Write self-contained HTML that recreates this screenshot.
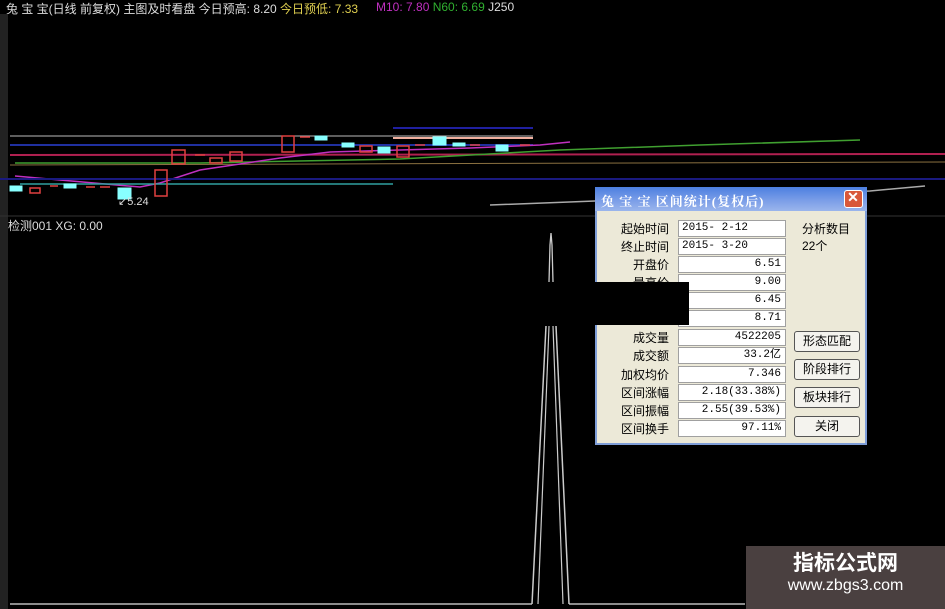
<!DOCTYPE html>
<html><head><meta charset="utf-8"><style>
*{margin:0;padding:0;box-sizing:border-box}
body{width:945px;height:609px;background:#000;position:relative;overflow:hidden;font-family:"Liberation Sans","Noto Sans CJK SC",sans-serif}
.t{position:absolute;font-size:12px;white-space:nowrap}
.dlg{position:absolute;left:595px;top:187px;width:272px;height:258px;background:#ece9d8;border:2px solid #7f9ed8;border-top:none}
.tb{position:absolute;left:-2px;top:0;width:272px;height:24px;background:linear-gradient(#4c7fe0,#7ea0e8 60%,#9bb5ec);color:#fff;font-size:13px;font-weight:bold;padding:4px 0 0 6px;letter-spacing:1px;font-family:"Liberation Serif","Noto Serif CJK SC",serif}
.x{position:absolute;right:4px;top:3px;width:19px;height:18px;background:#d9583a;border:1px solid #fff;border-radius:3px;color:#fff;font-size:14px;text-align:center;line-height:16px}
.lb{position:absolute;left:0;width:72px;text-align:right;font-size:12px;color:#000}
.f{position:absolute;left:81px;width:108px;height:17px;background:#fff;border:1px solid #a0a0a0;font-size:11px;text-align:right;padding-right:4px;line-height:15px;font-family:"Liberation Mono","Noto Sans CJK SC",monospace}
.b{position:absolute;left:197px;width:66px;height:21px;background:#f4f3ee;border:1px solid #555;border-radius:3px;font-size:12px;text-align:center;line-height:19px}
</style></head><body>
<div class="t" style="left:6px;top:0;color:#ddd">兔 宝 宝(日线 前复权) 主图及时看盘 今日预高: 8.20 <span style="color:#e0d050">今日预低: 7.33</span></div>
<div class="t" style="left:376px;top:0;color:#c030c0">M10: 7.80 <span style="color:#30b030">N60: 6.69</span> <span style="color:#ddd">J250</span></div>
<div style="position:absolute;left:0;top:14px;width:8px;height:595px;background:#222"></div>
<svg width="945" height="609" style="position:absolute;left:0;top:0">
<line x1="10" y1="136" x2="533" y2="136" stroke="#bbb"/>
<line x1="10" y1="145" x2="533" y2="145" stroke="#2030a0" stroke-width="2"/>
<line x1="393" y1="128" x2="533" y2="128" stroke="#2020a0" stroke-width="2"/>
<line x1="10" y1="155" x2="945" y2="154" stroke="#b02050" stroke-width="2"/>
<line x1="10" y1="165" x2="945" y2="162" stroke="#8a7040"/>
<polyline points="15,163 200,163 400,159 560,150 700,145 860,140" fill="none" stroke="#40a030" stroke-width="1.5"/>
<polyline points="15,176 60,180 140,187 160,183 200,170 280,158 330,152 400,150 470,148 540,145 570,142" fill="none" stroke="#c030c0" stroke-width="1.5"/>
<line x1="20" y1="184" x2="393" y2="184" stroke="#30a0a0" stroke-width="1.5"/>
<line x1="0" y1="179" x2="945" y2="179" stroke="#1a1a80" stroke-width="2"/>
<polyline points="490,205 595,201 870,191 925,186" fill="none" stroke="#aaa" stroke-width="1.5"/>
<line x1="0" y1="216" x2="945" y2="216" stroke="#333"/>
<line x1="393" y1="138" x2="533" y2="138" stroke="#f0b0a0" stroke-width="2"/>
<g fill="#8ff" stroke="#8ff">
<rect x="10" y="186" width="12" height="5"/><rect x="64" y="184" width="12" height="4"/><rect x="118" y="188" width="13" height="11"/><rect x="315" y="136" width="12" height="4"/><rect x="342" y="143" width="12" height="4"/><rect x="378" y="147" width="12" height="6"/><rect x="433" y="137" width="13" height="8"/><rect x="453" y="143" width="12" height="3"/><rect x="496" y="145" width="12" height="6"/>
</g>
<g fill="none" stroke="#e04040" stroke-width="1.5">
<rect x="30" y="188" width="10" height="5"/><rect x="155" y="170" width="12" height="26"/><rect x="172" y="150" width="13" height="14"/><rect x="230" y="152" width="12" height="9"/><rect x="282" y="136" width="12" height="16"/><rect x="360" y="146" width="12" height="6"/><rect x="397" y="146" width="12" height="11"/><rect x="210" y="158" width="12" height="5"/>
<line x1="195" y1="155" x2="205" y2="155"/><line x1="50" y1="186" x2="58" y2="186"/><line x1="86" y1="187" x2="95" y2="187"/><line x1="100" y1="187" x2="110" y2="187"/><line x1="300" y1="137" x2="310" y2="137"/><line x1="415" y1="145" x2="425" y2="145"/><line x1="470" y1="145" x2="480" y2="145"/><line x1="520" y1="145" x2="530" y2="145"/>
</g>
<text x="118" y="205" fill="#ddd" font-size="11" font-family="Liberation Sans">↙5.24</text>
<line x1="10" y1="604" x2="532" y2="604" stroke="#bbb" stroke-width="1.5"/>
<line x1="569" y1="604" x2="745" y2="604" stroke="#bbb" stroke-width="1.5"/>
<polyline points="532,604 546,326" fill="none" stroke="#ccc" stroke-width="1.5"/>
<polyline points="538,604 549,326" fill="none" stroke="#ccc" stroke-width="1.2"/>
<polyline points="569,604 556,326" fill="none" stroke="#ccc" stroke-width="1.5"/>
<polyline points="563,604 553,326" fill="none" stroke="#ccc" stroke-width="1.2"/>
<polyline points="549,282 550,245 551,233 552,245 553,282" fill="none" stroke="#ccc" stroke-width="1.3"/>
</svg>
<div class="t" style="left:8px;top:217px;color:#ddd">检测001 XG: 0.00</div>
<div class="dlg">
<div class="tb">兔 宝 宝 区间统计(复权后)<div class="x">✕</div></div>
<div class="lb" style="top:33px">起始时间</div><div class="f" style="top:33px;text-align:left;padding-left:3px">2015- 2-12</div>
<div class="lb" style="top:51px">终止时间</div><div class="f" style="top:51px;text-align:left;padding-left:3px">2015- 3-20</div>
<div class="lb" style="top:69px">开盘价</div><div class="f" style="top:69px">6.51</div>
<div class="lb" style="top:87px">最高价</div><div class="f" style="top:87px">9.00</div>
<div class="f" style="top:105px">6.45</div>
<div class="f" style="top:123px">8.71</div>
<div class="lb" style="top:142px">成交量</div><div class="f" style="top:142px">4522205</div>
<div class="lb" style="top:160px">成交额</div><div class="f" style="top:160px">33.2亿</div>
<div class="lb" style="top:179px">加权均价</div><div class="f" style="top:179px">7.346</div>
<div class="lb" style="top:197px">区间涨幅</div><div class="f" style="top:197px">2.18(33.38%)</div>
<div class="lb" style="top:215px">区间振幅</div><div class="f" style="top:215px">2.55(39.53%)</div>
<div class="lb" style="top:233px">区间换手</div><div class="f" style="top:233px">97.11%</div>
<div style="position:absolute;left:205px;top:33px;font-size:12px">分析数目</div>
<div style="position:absolute;left:205px;top:50px;font-size:12px">22个</div>
<div class="b" style="top:144px">形态匹配</div>
<div class="b" style="top:172px">阶段排行</div>
<div class="b" style="top:200px">板块排行</div>
<div class="b" style="top:229px">关闭</div>
</div>
<div style="position:absolute;left:595px;top:282px;width:94px;height:43px;background:#000"></div>
<div style="position:absolute;left:746px;top:546px;width:199px;height:63px;background:#4a4040;color:#fff;text-align:center">
<div style="font-size:21px;font-weight:bold;margin-top:6px;line-height:24px">指标公式网</div>
<div style="font-size:16px;line-height:20px">www.zbgs3.com</div></div>
</body></html>
